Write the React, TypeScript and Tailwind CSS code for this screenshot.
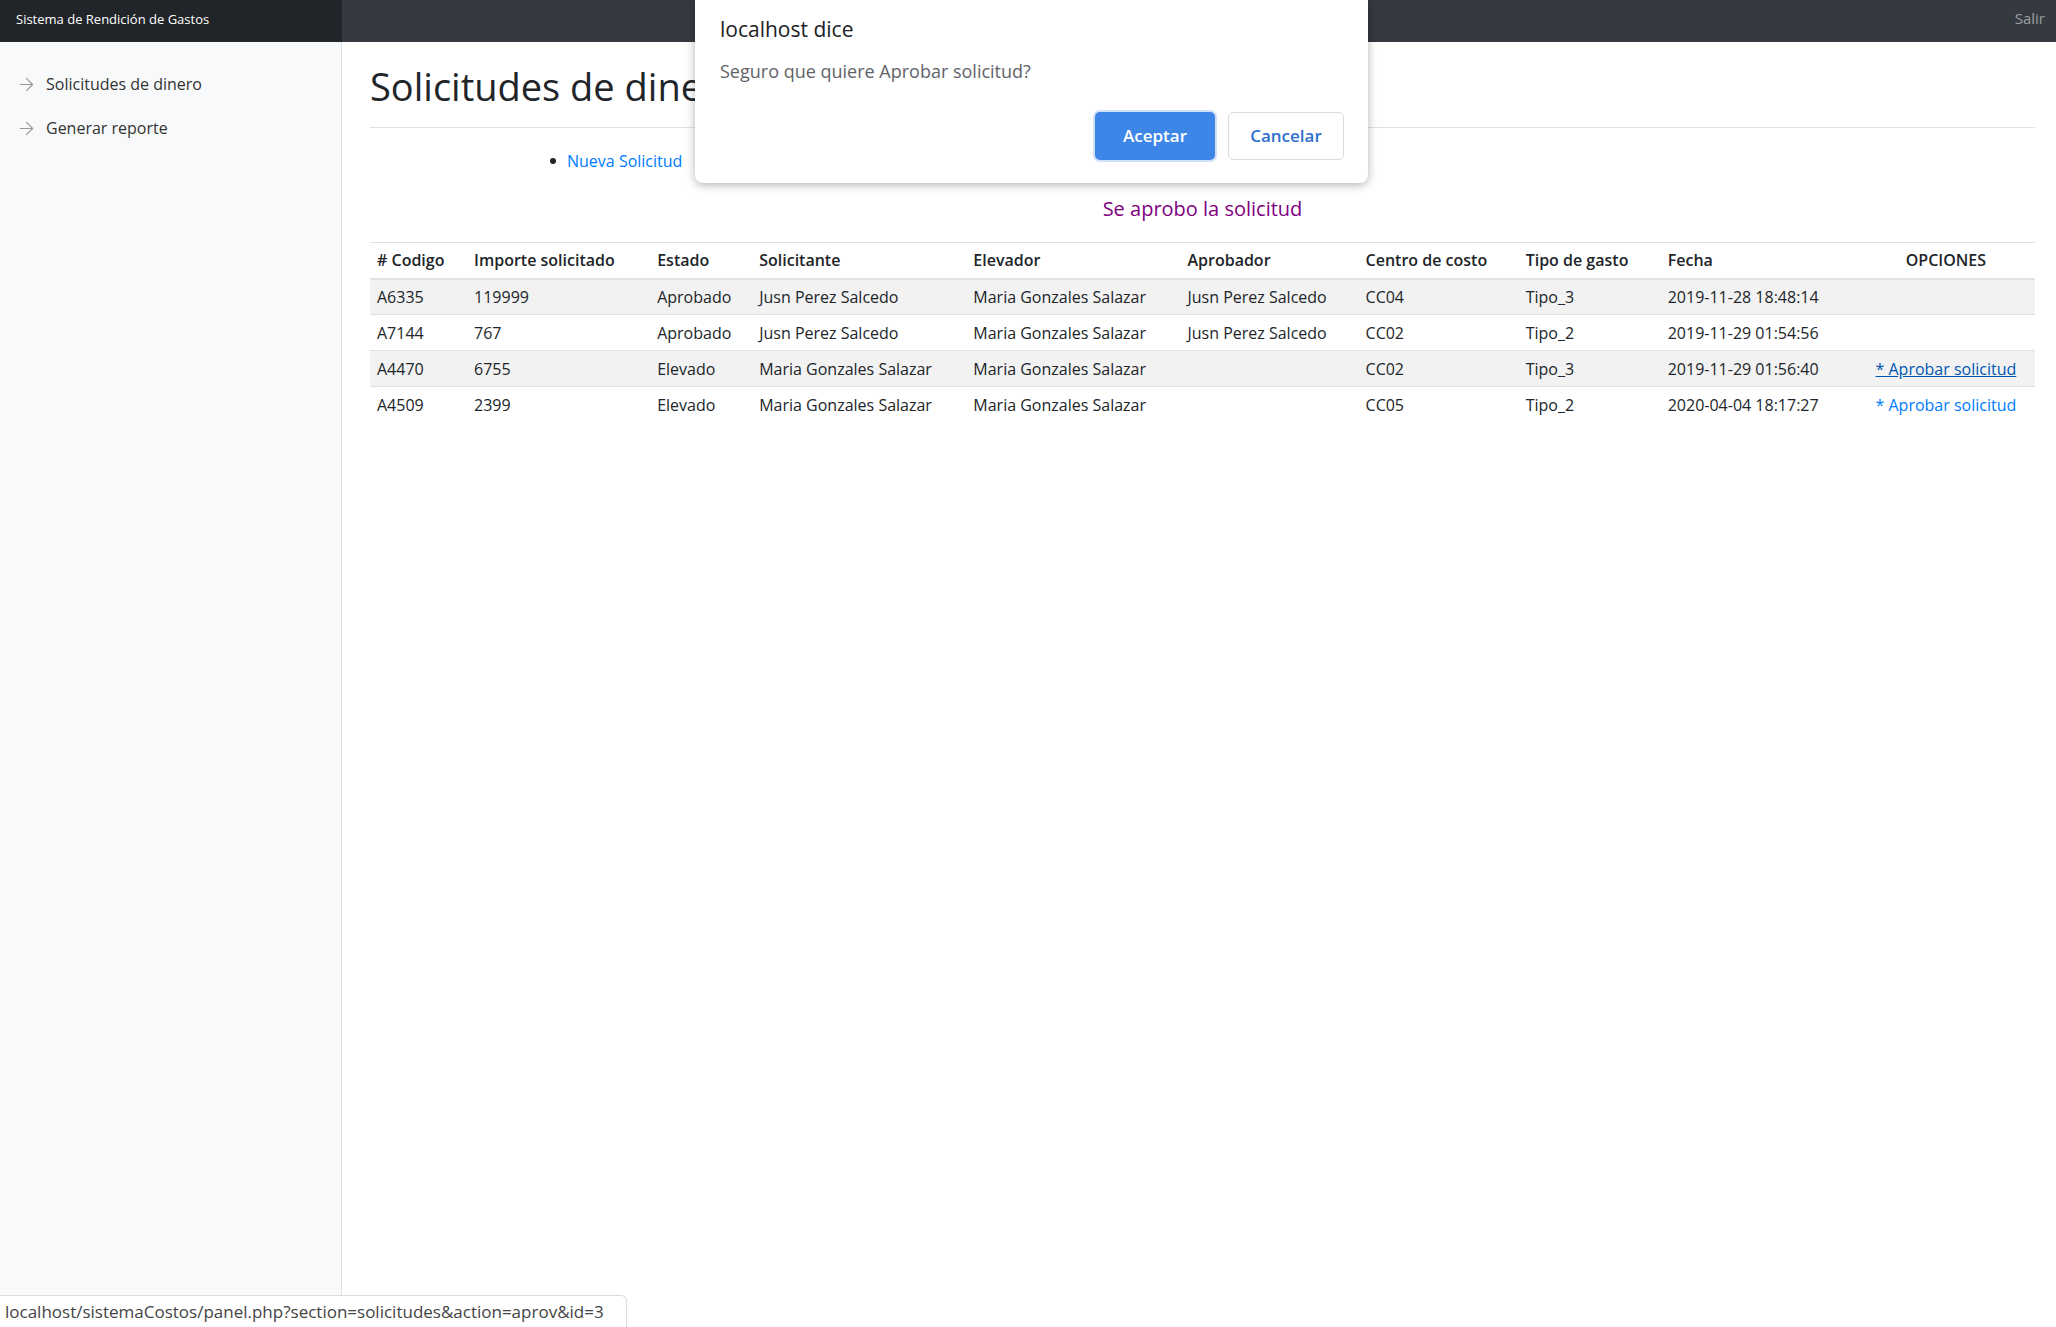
import { ArrowRight } from "lucide-react";

const rows = [
  { codigo: "A6335", importe: "119999", estado: "Aprobado", solicitante: "Jusn Perez Salcedo", elevador: "Maria Gonzales Salazar", aprobador: "Jusn Perez Salcedo", centro: "CC04", tipo: "Tipo_3", fecha: "2019-11-28 18:48:14", opcion: "" },
  { codigo: "A7144", importe: "767", estado: "Aprobado", solicitante: "Jusn Perez Salcedo", elevador: "Maria Gonzales Salazar", aprobador: "Jusn Perez Salcedo", centro: "CC02", tipo: "Tipo_2", fecha: "2019-11-29 01:54:56", opcion: "" },
  { codigo: "A4470", importe: "6755", estado: "Elevado", solicitante: "Maria Gonzales Salazar", elevador: "Maria Gonzales Salazar", aprobador: "", centro: "CC02", tipo: "Tipo_3", fecha: "2019-11-29 01:56:40", opcion: "hover" },
  { codigo: "A4509", importe: "2399", estado: "Elevado", solicitante: "Maria Gonzales Salazar", elevador: "Maria Gonzales Salazar", aprobador: "", centro: "CC05", tipo: "Tipo_2", fecha: "2020-04-04 18:17:27", opcion: "link" },
];

const headers = [
  "# Codigo",
  "Importe solicitado",
  "Estado",
  "Solicitante",
  "Elevador",
  "Aprobador",
  "Centro de costo",
  "Tipo de gasto",
  "Fecha",
];

export default function App() {
  return (
    <div className="relative w-[2056px] h-[1327px] overflow-hidden bg-white font-['Open_Sans',sans-serif] text-[#212529]">
      {/* top navbar */}
      <nav className="flex h-[42px] bg-[#343a40]">
        <div className="flex w-[342px] items-center bg-[#212529] pl-[16px] pb-[3px] text-[13px] text-white">
          Sistema de Rendición de Gastos
        </div>
        <div className="flex flex-1 items-center justify-end pr-[11px] pb-[6px] text-[15px] text-white/50">
          Salir
        </div>
      </nav>

      <div className="flex h-[1285px]">
        {/* sidebar */}
        <aside className="w-[342px] bg-[#f8f9fa] pt-[20px] shadow-[inset_-1px_0_0_rgba(0,0,0,0.1)]">
          <SideItem label="Solicitudes de dinero" />
          <SideItem label="Generar reporte" />
        </aside>

        {/* main */}
        <main className="flex-1 pl-[28px] pr-[21px]">
          <div className="border-b border-[#dee2e6] pt-[22px] pb-[19px]">
            <h1 className="text-[38px] leading-[44px] font-medium">Solicitudes de dinero</h1>
          </div>

          <ul className="mt-[21px] pl-[180px]">
            <li className="flex items-center h-[24px] text-[16px]">
              <span className="mr-[11px] h-[6px] w-[6px] rounded-full bg-[#212529]"></span>
              <a className="text-[#007bff]">Nueva Solicitud</a>
            </li>
          </ul>

          <p className="mt-[22px] text-center text-[20px] leading-[28px] text-[#800080]">
            Se aprobo la solicitud
          </p>

          <table className="mt-[19px] w-full table-fixed border-collapse text-[16px]">
            <colgroup>
              <col className="w-[97px]" />
              <col className="w-[183px]" />
              <col className="w-[102px]" />
              <col className="w-[214px]" />
              <col className="w-[214px]" />
              <col className="w-[178px]" />
              <col className="w-[160px]" />
              <col className="w-[142px]" />
              <col className="w-[196px]" />
              <col className="w-[178px]" />
            </colgroup>
            <thead>
              <tr className="h-[36px] border-t border-b-2 border-[#dee2e6]">
                {headers.map((h) => (
                  <th key={h} className="pl-[7px] text-left font-semibold whitespace-nowrap">
                    {h}
                  </th>
                ))}
                <th className="text-center font-semibold">OPCIONES</th>
              </tr>
            </thead>
            <tbody>
              {rows.map((r, i) => (
                <tr
                  key={r.codigo}
                  className={`h-[36px] border-t border-[#dee2e6] ${i % 2 === 0 ? "bg-[#f2f2f2]" : "bg-white"}`}
                >
                  <td className="pl-[7px] whitespace-nowrap">{r.codigo}</td>
                  <td className="pl-[7px] whitespace-nowrap">{r.importe}</td>
                  <td className="pl-[7px] whitespace-nowrap">{r.estado}</td>
                  <td className="pl-[7px] whitespace-nowrap">{r.solicitante}</td>
                  <td className="pl-[7px] whitespace-nowrap">{r.elevador}</td>
                  <td className="pl-[7px] whitespace-nowrap">{r.aprobador}</td>
                  <td className="pl-[7px] whitespace-nowrap">{r.centro}</td>
                  <td className="pl-[7px] whitespace-nowrap">{r.tipo}</td>
                  <td className="pl-[7px] whitespace-nowrap">{r.fecha}</td>
                  <td className="text-center whitespace-nowrap">
                    {r.opcion === "hover" && (
                      <a className="text-[#0056b3] underline">* Aprobar solicitud</a>
                    )}
                    {r.opcion === "link" && <a className="text-[#007bff]">* Aprobar solicitud</a>}
                  </td>
                </tr>
              ))}
            </tbody>
          </table>
        </main>
      </div>

      {/* confirm dialog */}
      <div className="absolute left-[695px] top-0 h-[183px] w-[673px] rounded-b-[8px] bg-white shadow-[0_2px_10px_rgba(0,0,0,0.3)]">
        <div className="pl-[25px] pt-[14px] text-[21px] leading-[30px] text-[#202124]">localhost dice</div>
        <div className="mt-[14px] pl-[25px] text-[18px] leading-[26px] text-[#5f6368]">
          Seguro que quiere Aprobar solicitud?
        </div>
        <div className="mt-[28px] flex justify-end gap-[13px] pr-[24px]">
          <button className="h-[48px] w-[120px] rounded-[5px] bg-[#3d86e8] text-[17px] font-semibold text-white shadow-[0_0_0_2px_rgba(61,134,232,0.25)]">
            Aceptar
          </button>
          <button className="h-[48px] w-[116px] rounded-[5px] border border-[#dadce0] bg-white text-[17px] font-semibold text-[#2f6fd0]">
            Cancelar
          </button>
        </div>
      </div>

      {/* status bar */}
      <div className="absolute bottom-0 left-0 flex h-[32px] w-[627px] items-center rounded-tr-[6px] border-t border-r border-[#dcdcdc] bg-white pl-[5px] text-[17px] text-[#444]">
        localhost/sistemaCostos/panel.php?section=solicitudes&amp;action=aprov&amp;id=3
      </div>
    </div>
  );
}

function SideItem({ label }: { label: string }) {
  return (
    <div className="flex h-[44px] items-center pl-[16px] text-[16px] font-medium text-[#333]">
      <ArrowRight size={21} strokeWidth={1.3} className="mr-[9px] text-[#999]" />
      {label}
    </div>
  );
}
